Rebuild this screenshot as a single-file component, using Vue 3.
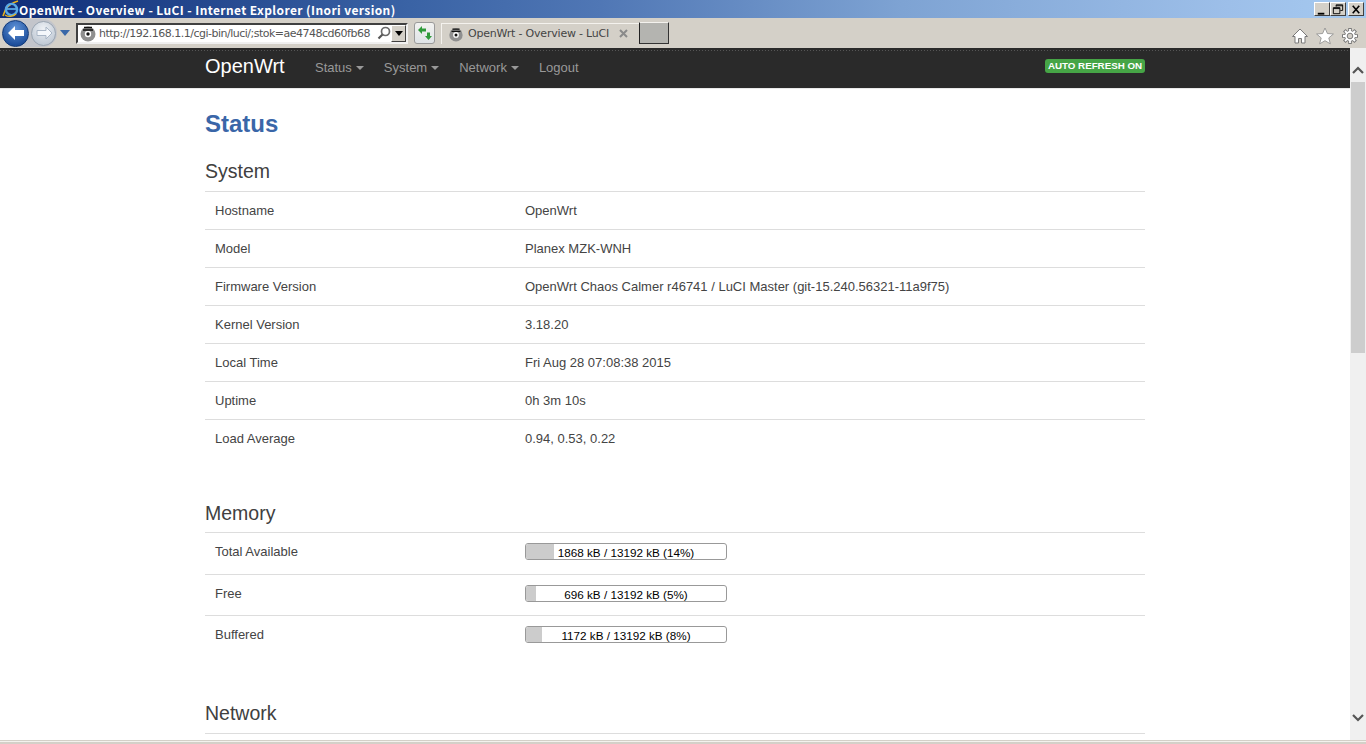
<script setup>
const system = [
  ['Hostname', 'OpenWrt'],
  ['Model', 'Planex MZK-WNH'],
  ['Firmware Version', 'OpenWrt Chaos Calmer r46741 / LuCI Master (git-15.240.56321-11a9f75)'],
  ['Kernel Version', '3.18.20'],
  ['Local Time', 'Fri Aug 28 07:08:38 2015'],
  ['Uptime', '0h 3m 10s'],
  ['Load Average', '0.94, 0.53, 0.22'],
]
const memory = [
  ['Total Available', '1868 kB / 13192 kB (14%)', 14],
  ['Free', '696 kB / 13192 kB (5%)', 5],
  ['Buffered', '1172 kB / 13192 kB (8%)', 8],
]
const nav = ['Status', 'System', 'Network']
</script>

<template>
  <div class="window">
    <header class="titlebar">
      <svg class="ie" width="18" height="18" viewBox="0 0 18 18">
        <path d="M1 16C3 8 8 3 16 1" fill="none" stroke="#e8b21c" stroke-width="1.6" />
        <circle cx="9.5" cy="9.5" r="5.6" fill="none" stroke="#5aa9e6" stroke-width="2.4" />
        <path d="M5 9h9" stroke="#5aa9e6" stroke-width="1.8" />
        <path d="M3 15c3 2 8 2 11-1" fill="none" stroke="#e8b21c" stroke-width="1.4" />
      </svg>
      <span class="title">OpenWrt - Overview - LuCI - Internet Explorer (Inori version)</span>
      <div class="winbtns">
        <span class="winbtn"><svg width="15" height="13" viewBox="0 0 15 13"><path d="M3 10h7v2H3z" fill="#000" /></svg></span>
        <span class="winbtn"><svg width="15" height="13" viewBox="0 0 15 13"><path d="M5.5 3.5V1.500h7v6h-2.500M2.500 4.500h7v6.500h-7zM2.500 5.500h7M5.500 2.500h7" fill="none" stroke="#000" /></svg></span>
        <span class="winbtn close"><svg width="15" height="13" viewBox="0 0 15 13"><path d="M4 2.500l7 8M11 2.500l-7 8" stroke="#000" stroke-width="1.700" /></svg></span>
      </div>
    </header>

    <div class="toolbar">
      <div class="navcluster">
        <span class="round back">
          <svg width="22" height="22" viewBox="0 0 22 22"><path d="M3 11l7-7v4h9v6h-9v4z" fill="#fff" /></svg>
        </span>
        <span class="round fwd">
          <svg width="20" height="20" viewBox="0 0 20 20"><path d="M18 10l-6-6v3.500H3v5h9V16z" fill="#f4f7fb" stroke="#a9b6c6" /></svg>
        </span>
      </div>
      <svg class="drop" width="10" height="6" viewBox="0 0 10 6"><path d="M0 0h10L5 6z" fill="#3a68a8" /></svg>
      <div class="address">
        <svg class="favicon" width="18" height="18" viewBox="0 0 18 18">
          <circle cx="9" cy="10" r="7.500" fill="#8f8f8f" />
          <circle cx="9" cy="10" r="3.200" fill="#fff" />
          <circle cx="9" cy="10" r="1.700" fill="#111" />
          <path d="M5 3.500h8M4 6h10" stroke="#111" stroke-width="1.300" />
        </svg>
        <span class="url">http://192.168.1.1/cgi-bin/luci/;stok=ae4748cd60fb68</span>
        <svg class="lens" width="14" height="14" viewBox="0 0 14 14">
          <circle cx="8.500" cy="5.500" r="4" fill="none" stroke="#6a6a6a" stroke-width="1.700" />
          <path d="M5.500 8.500L1.500 12.500" stroke="#555" stroke-width="2.200" />
        </svg>
        <span class="addrdrop"><svg width="8" height="5" viewBox="0 0 8 5"><path d="M0 0h8L4 5z" fill="#000" /></svg></span>
      </div>
      <span class="refresh">
        <svg width="18" height="16" viewBox="0 0 18 16">
          <path d="M2 5l4-4v2.500h4v3H6V9zM16 11l-3.500 4L9 11h2V7.500h3V11z" fill="#2f9a3a" />
        </svg>
      </span>
      <div class="tab">
        <svg class="tabicon" width="16" height="16" viewBox="0 0 18 18">
          <circle cx="9" cy="10" r="7.500" fill="#8f8f8f" />
          <circle cx="9" cy="10" r="3.200" fill="#fff" />
          <circle cx="9" cy="10" r="1.700" fill="#111" />
          <path d="M5 3.500h8M4 6h10" stroke="#111" stroke-width="1.300" />
        </svg>
        <span class="tabtext">OpenWrt - Overview - LuCI</span>
        <svg class="tabx" width="9" height="9" viewBox="0 0 9 9"><path d="M1 1l7 7M8 1L1 8" stroke="#8a8a8a" stroke-width="2" /></svg>
      </div>
      <span class="newtab"></span>
      <div class="tools">
        <svg width="18" height="18" viewBox="0 0 18 18"><path d="M1.500 9.500L9 2l7.500 7.500h-2.500v6.500h-3.500v-4.500h-3V16H4V9.500z" fill="#fff" stroke="#7a7a7a" /></svg>
        <svg width="18" height="18" viewBox="0 0 18 18"><path d="M9 1l2.400 5.500 6 .5-4.600 3.900 1.500 5.900L9 13.700 3.700 16.800l1.500-5.900L.6 7l6-.5z" fill="#fff" stroke="#8a8a8a" stroke-width=".8" /></svg>
        <svg width="18" height="18" viewBox="0 0 18 18">
          <g stroke="#7a7a7a" stroke-width="3.600"><path d="M9 1v16M1 9h16M3.300 3.300l11.400 11.400M14.700 3.300L3.300 14.700" /></g>
          <circle cx="9" cy="9" r="5.800" fill="#7a7a7a" />
          <g stroke="#fff" stroke-width="1.800"><path d="M9 2v14M2 9h14M4 4l10 10M14 4L4 14" /></g>
          <circle cx="9" cy="9" r="4.900" fill="#fff" />
          <circle cx="9" cy="9" r="2.800" fill="#d4d0c8" stroke="#7a7a7a" />
        </svg>
      </div>
    </div>

    <div class="viewport">
      <div class="page">
        <nav class="navbar">
          <div class="container navrow">
            <span class="brand">OpenWrt</span>
            <a v-for="n in nav" :key="n" class="navlink">{{ n }}<i class="caret"></i></a>
            <a class="navlink">Logout</a>
            <span class="badge">AUTO REFRESH ON</span>
          </div>
        </nav>
        <main class="container">
          <h2 class="pagetitle">Status</h2>

          <h3 class="section first">System</h3>
          <div class="rows">
            <div v-for="r in system" :key="r[0]" class="row">
              <span class="key">{{ r[0] }}</span>
              <span class="val">{{ r[1] }}</span>
            </div>
          </div>

          <h3 class="section mem">Memory</h3>
          <div class="rows">
            <div v-for="r in memory" :key="r[0]" class="row barrow">
              <span class="key">{{ r[0] }}</span>
              <span class="val">
                <span class="bar">
                  <span class="fill" :style="{ width: r[2] + '%' }"></span>
                  <span class="bartext">{{ r[1] }}</span>
                </span>
              </span>
            </div>
          </div>

          <h3 class="section net">Network</h3>
          <div class="rows netrows"></div>
        </main>
      </div>
      <aside class="scrollbar">
        <svg class="chev" width="14" height="10" viewBox="0 0 14 10"><path d="M2 8l5-5 5 5" fill="none" stroke="#555" stroke-width="2.200" /></svg>
        <span class="thumb"></span>
        <svg class="chev down" width="14" height="10" viewBox="0 0 14 10"><path d="M2 2l5 5 5-5" fill="none" stroke="#555" stroke-width="2.200" /></svg>
      </aside>
    </div>
    <div class="bottomedge"></div>
  </div>
</template>

<style>
html, body { margin: 0; overflow: hidden; }
</style>

<style scoped>
.window {
  width: 1366px;
  height: 744px;
  display: flex;
  flex-direction: column;
  overflow: hidden;
  background: #d4d0c8;
  font-family: "Liberation Sans", Arial, sans-serif;
}
.titlebar {
  height: 18px;
  flex: none;
  display: flex;
  align-items: center;
  padding-left: 2px;
  background: linear-gradient(90deg, #0f2d78 0%, #3a63a5 30%, #5077b5 44%, #7ea3d3 66%, #9dbfe9 90%, #a6caf0 100%);
}
.ie { flex: none; margin-right: -1px; }
.title {
  color: #fff;
  font-family: "Noto Sans CJK JP", "Liberation Sans", sans-serif;
  font-weight: 700;
  font-size: 12px;
  letter-spacing: 0.4px;
  white-space: nowrap;
}
.winbtns { margin-left: auto; display: flex; margin-right: 2px; }
.winbtn {
  width: 16px;
  height: 14px;
  box-sizing: border-box;
  background: #d4d0c8;
  border: 1px solid;
  border-color: #fff #404040 #404040 #fff;
  display: flex;
  align-items: center;
  justify-content: center;
}
.winbtn.close { margin-left: 2px; }
.toolbar {
  height: 30px;
  flex: none;
  display: flex;
  align-items: center;
  background: #d4d0c8;
}
.navcluster {
  display: flex;
  align-items: center;
  margin-left: 2px;
  width: 55px;
  height: 28px;
  border-radius: 14px;
  background: #c3c5cb;
}
.round { border-radius: 50%; display: flex; align-items: center; justify-content: center; flex: none; }
.back {
  width: 27px;
  height: 27px;
  background: radial-gradient(circle at 50% 30%, #5f93d8, #1e4f9c 75%);
  border: 1px solid #123a78;
  box-sizing: border-box;
}
.fwd {
  width: 25px;
  height: 25px;
  margin-left: 2px;
  box-sizing: border-box;
  background: radial-gradient(circle at 50% 30%, #eef1f5, #bcc6d2 85%);
  border: 1px solid #9aa5b2;
}
.drop { margin-left: 3px; flex: none; }
.address {
  margin-left: 6px;
  width: 332px;
  height: 21px;
  box-sizing: border-box;
  display: flex;
  align-items: center;
  background: #fff;
  border: 2px solid;
  border-color: #404040 #f0f0f0 #f0f0f0 #404040;
}
.favicon { margin-left: 1px; flex: none; }
.url {
  margin-left: 2px;
  font-size: 11px;
  color: #555;
  font-family: "DejaVu Sans", sans-serif;
  letter-spacing: -0.5px;
  white-space: nowrap;
  width: 278px;
}
.lens { margin-left: 2px; flex: none; }
.addrdrop {
  margin-left: auto;
  width: 15px;
  height: 17px;
  box-sizing: border-box;
  background: #d4d0c8;
  border: 1px solid;
  border-color: #fff #404040 #404040 #fff;
  display: flex;
  align-items: center;
  justify-content: center;
}
.refresh {
  margin-left: 6px;
  width: 21px;
  height: 22px;
  box-sizing: border-box;
  border: 1px solid #9a9a9a;
  border-radius: 3px;
  background: linear-gradient(#f2f2f0, #dfe3e6);
  display: flex;
  align-items: center;
  justify-content: center;
}
.tab {
  margin-left: 6px;
  width: 198px;
  height: 21px;
  box-sizing: border-box;
  display: flex;
  align-items: center;
  padding-left: 6px;
  border-left: 1px solid #f4f2ee;
  border-top: 1px solid #f4f2ee;
}
.tabicon { flex: none; }
.tabtext {
  margin-left: 4px;
  font-size: 11px;
  color: #444;
  font-family: "DejaVu Sans", sans-serif;
  letter-spacing: -0.2px;
  white-space: nowrap;
  width: 148px;
}
.tabx { margin-left: 3px; flex: none; }
.newtab {
  width: 30px;
  height: 22px;
  box-sizing: border-box;
  background: #b4b4b0;
  border: 1px solid;
  border-color: #f4f2ee #333 #333 #222;
}
.tools {
  margin-left: auto;
  margin-right: 7px;
  margin-top: 6px;
  display: flex;
  gap: 7px;
}
.viewport {
  height: 692px;
  flex: none;
  display: flex;
  background: #fff;
}
.page {
  flex: 1;
  min-width: 0;
  overflow: hidden;
  background: #fff;
  color: #444;
  font-size: 13px;
}
.navbar {
  height: 40px;
  box-sizing: border-box;
  background: #2a2a2a;
  background-image: repeating-linear-gradient(90deg, #555 0 1px, transparent 1px 3px);
  background-size: 100% 1px;
  background-position: 0 2px;
  background-repeat: no-repeat;
  box-shadow: 0 1px 0 #e8e8e8;
}
.container { width: 940px; margin-left: 205px; }
.navrow { display: flex; align-items: center; height: 100%; position: relative; }
.brand { color: #fff; font-size: 20px; width: 100px; margin-top: -3px; }
.navlink {
  color: #999;
  font-size: 13px;
  padding: 0 10px;
  display: flex;
  align-items: center;
  margin-top: -2px;
}
.caret {
  display: block;
  margin-left: 4px;
  margin-top: 1px;
  border-top: 4px solid #999;
  border-left: 4px solid transparent;
  border-right: 4px solid transparent;
}
.badge {
  margin-left: auto;
  margin-top: -4px;
  width: 100px;
  height: 14px;
  line-height: 14px;
  text-align: center;
  box-sizing: border-box;
  background: #46a546;
  border-radius: 3px;
  color: #fff;
  font-size: 9.750px;
  font-weight: 700;
  white-space: nowrap;
}
.pagetitle {
  margin: 0;
  padding-top: 22px;
  color: #3a66a8;
  font-size: 24px;
  line-height: 28px;
  font-weight: 700;
}
.section {
  margin: 0;
  font-weight: 400;
  font-size: 19.500px;
  line-height: 24px;
  color: #404040;
  height: 32px;
  box-sizing: border-box;
}
.section.first { margin-top: 21px; }
.section.mem { margin-top: 44px; height: 31px; }
.section.net { margin-top: 44px; height: 32px; }
.row {
  display: flex;
  height: 38px;
  box-sizing: border-box;
  border-top: 1px solid #ddd;
  align-items: center;
  color: #444;
}
.barrow { height: 41.600px; }
.key { width: 320px; padding-left: 10px; box-sizing: border-box; flex: none; }
.val { white-space: nowrap; }
.barrow .key { margin-top: -3px; }
.barrow .val { margin-top: -3px; }
.netrows { border-top: 1px solid #ddd; }
.bar {
  position: relative;
  display: block;
  width: 202px;
  height: 17px;
  box-sizing: border-box;
  border: 1px solid #999;
  border-radius: 3px;
  overflow: hidden;
  background: #fff;
}
.fill { position: absolute; left: 0; top: 0; bottom: 0; background: #ccc; }
.bartext {
  position: absolute;
  left: 0;
  right: 0;
  top: 1px;
  text-align: center;
  font-size: 11.700px;
  line-height: 15px;
  color: #000;
}
.scrollbar {
  width: 16px;
  flex: none;
  background: #f0f0f0;
  display: flex;
  flex-direction: column;
  align-items: center;
}
.chev { margin-top: 17px; flex: none; }
.thumb {
  margin-top: 7px;
  width: 14px;
  height: 271px;
  background: #cdcdcd;
  flex: none;
}
.chev.down { margin-top: auto; margin-bottom: 17px; }
.bottomedge {
  flex: none;
  height: 4px;
  box-sizing: border-box;
  background: #d4d0c8;
  border-top: 1px solid #d4d0c8;
  box-shadow: inset 0 1px 0 #f4f2ee;
}
</style>
